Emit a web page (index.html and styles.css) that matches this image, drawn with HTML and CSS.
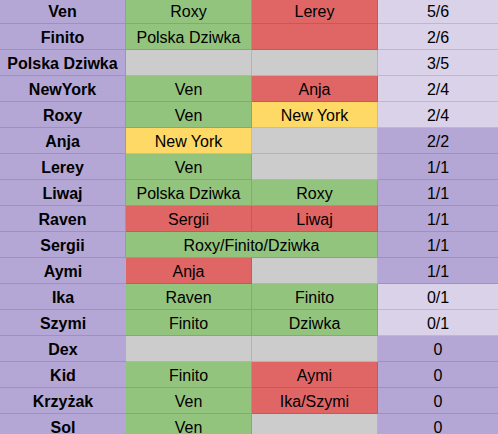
FILE: index.html
```html
<!DOCTYPE html>
<html>
<head>
<meta charset="utf-8">
<link rel="stylesheet" href="styles.css">
</head>
<body>
<div class="sheet">
  <div class="c name">Ven</div><div class="c g">Roxy</div><div class="c r">Lerey</div><div class="c l">5/6</div>
  <div class="c name">Finito</div><div class="c g">Polska Dziwka</div><div class="c r"></div><div class="c l">2/6</div>
  <div class="c name">Polska Dziwka</div><div class="c e"></div><div class="c e"></div><div class="c l">3/5</div>
  <div class="c name">NewYork</div><div class="c g">Ven</div><div class="c r">Anja</div><div class="c l">2/4</div>
  <div class="c name">Roxy</div><div class="c g">Ven</div><div class="c y">New York</div><div class="c l">2/4</div>
  <div class="c name">Anja</div><div class="c y">New York</div><div class="c e"></div><div class="c p">2/2</div>
  <div class="c name">Lerey</div><div class="c g">Ven</div><div class="c e"></div><div class="c p">1/1</div>
  <div class="c name">Liwaj</div><div class="c g">Polska Dziwka</div><div class="c g">Roxy</div><div class="c p">1/1</div>
  <div class="c name">Raven</div><div class="c r">Sergii</div><div class="c r">Liwaj</div><div class="c p">1/1</div>
  <div class="c name">Sergii</div><div class="c g span2">Roxy/Finito/Dziwka</div><div class="c p">1/1</div>
  <div class="c name">Aymi</div><div class="c r">Anja</div><div class="c e"></div><div class="c p">1/1</div>
  <div class="c name">Ika</div><div class="c g">Raven</div><div class="c g">Finito</div><div class="c l">0/1</div>
  <div class="c name">Szymi</div><div class="c g">Finito</div><div class="c g">Dziwka</div><div class="c l">0/1</div>
  <div class="c name">Dex</div><div class="c e"></div><div class="c e"></div><div class="c p">0</div>
  <div class="c name">Kid</div><div class="c g">Finito</div><div class="c r">Aymi</div><div class="c p">0</div>
  <div class="c name">Krzyżak</div><div class="c g">Ven</div><div class="c r">Ika/Szymi</div><div class="c p">0</div>
  <div class="c name">Sol</div><div class="c g">Ven</div><div class="c e"></div><div class="c p">0</div>
</div>
</body>
</html>
```

FILE: styles.css
```css
html, body {
  margin: 0;
  padding: 0;
  overflow: hidden;
  background: #ffffff;
}
.sheet {
  margin-top: -2px;
  display: grid;
  grid-template-columns: 126px 126px 126px 120px;
  grid-auto-rows: 26px;
  font-family: "Liberation Sans", Arial, sans-serif;
  font-size: 16px;
  color: #000;
}
.c {
  box-sizing: border-box;
  border-right: 1px solid rgba(0, 0, 0, 0.12);
  border-bottom: 1px solid rgba(0, 0, 0, 0.12);
  display: flex;
  align-items: flex-end;
  justify-content: center;
  padding-bottom: 2px;
  white-space: nowrap;
  overflow: hidden;
  line-height: normal;
}
.c:nth-child(4n) {
  border-right: none;
}
.name {
  background: #b4a7d6;
  font-weight: bold;
}
.g { background: #93c47d; }
.r { background: #e06666; }
.y { background: #ffd966; }
.e { background: #cccccc; }
.l { background: #d9d2e9; }
.p { background: #b4a7d6; }
.span2 { grid-column: span 2; }
.p, .l { border-right: none; }
```
